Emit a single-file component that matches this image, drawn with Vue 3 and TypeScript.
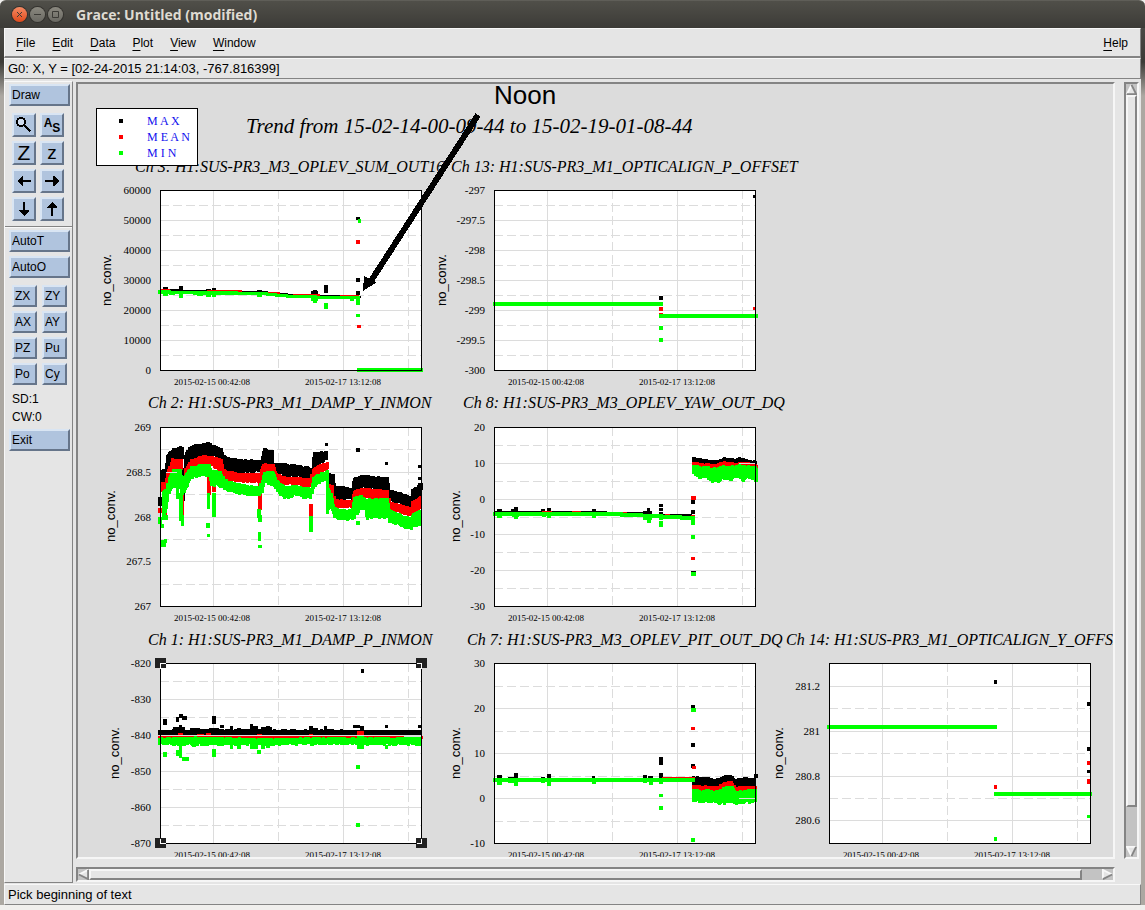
<script setup lang="ts">
type Rect = [x: number, w: number, y: number, h: number]
type Stop = [x: number, top: number, bottom: number]
type Tone = 'max' | 'mean' | 'min' | 'grid'

interface Layer {
  tone: Tone
  bands?: Stop[][]
  rects?: Rect[]
  rough?: number
}

interface Chart {
  title: string
  titleX: number
  titleY: number
  x: number
  y: number
  h: number
  unitX: number
  unitY: number
  ticks: string[]
  first: number
  pitch: number
  originX: number
  originY: number
  selected?: boolean
  layers: Layer[]
}

// Sample coordinates are stored in thirds of a canvas unit from each chart's origin.
const SUB = 3
const PLOT_W = 262

const charts: Chart[] = [
  {
    title: 'Ch 3: H1:SUS-PR3_M3_OPLEV_SUM_OUT16', titleX: 135, titleY: 172,
    x: 160, y: 190, h: 180, unitX: 111, unitY: 280,
    ticks: ['60000', '50000', '40000', '30000', '20000', '10000', '0'], first: 0, pitch: 30,
    originX: 90, originY: 80,
    layers: [
      {
        tone: 'max', bands: [[[210, 626, 634], [290, 630, 638], [370, 630, 638], [520, 634, 640], [600, 642, 648], [808, 647, 653]]],
        rects: [[218, 16, 621, 10], [267, 13, 618, 12], [348, 14, 628, 8], [366, 12, 623, 10], [502, 16, 630, 8], [663, 20, 633, 12], [669, 11, 630, 10], [702, 12, 615, 23], [798, 12, 412, 10], [798, 12, 594, 12], [798, 12, 633, 12]],
      },
      { tone: 'mean', rects: [[212, 28, 626, 6], [350, 105, 630, 6], [535, 35, 636, 6], [610, 80, 641, 6], [750, 58, 645, 6], [798, 12, 480, 12], [802, 11, 735, 9]] },
      {
        tone: 'min', bands: [[[205, 630, 641], [290, 634, 644], [370, 632, 644], [450, 635, 645], [520, 637, 647], [600, 645, 655], [700, 647, 657], [804, 649, 659]]],
        rects: [[218, 14, 636, 12], [267, 13, 640, 14], [320, 18, 638, 10], [348, 16, 640, 11], [366, 12, 638, 11], [502, 14, 640, 11], [663, 22, 650, 12], [669, 12, 655, 14], [702, 12, 669, 18], [780, 12, 650, 13], [798, 12, 648, 14], [798, 12, 663, 12], [798, 12, 702, 9], [803, 10, 417, 12], [801, 198, 864, 11]],
      },
    ],
  },
  {
    title: 'Ch 13: H1:SUS-PR3_M1_OPTICALIGN_P_OFFSET', titleX: 451, titleY: 172,
    x: 494, y: 190, h: 180, unitX: 446, unitY: 280,
    ticks: ['-297', '-297.5', '-298', '-298.5', '-299', '-299.5', '-300'], first: 0, pitch: 30,
    originX: 435, originY: 80,
    layers: [
      { tone: 'max', rects: [[672, 12, 648, 12], [954, 8, 345, 9]] },
      { tone: 'mean', rects: [[672, 12, 681, 12], [672, 12, 699, 9], [954, 8, 681, 9]] },
      { tone: 'min', rects: [[174, 510, 666, 12], [672, 297, 702, 12], [672, 12, 738, 12], [672, 12, 774, 12]] },
    ],
  },
  {
    title: 'Ch 2: H1:SUS-PR3_M1_DAMP_Y_INMON', titleX: 148, titleY: 408,
    x: 160, y: 427, h: 179, unitX: 115, unitY: 516,
    ticks: ['269', '268.5', '268', '267.5', '267'], first: 0, pitch: 44.75,
    originX: 95, originY: 390,
    layers: [
      {
        tone: 'max', rough: 6,
        bands: [
          [[198, 240, 290], [206, 240, 280], [215, 192, 250], [230, 178, 208], [260, 172, 208]],
          [[266, 195, 230], [280, 172, 210], [300, 165, 198], [335, 160, 192], [375, 176, 208], [384, 200, 238], [430, 211, 248], [494, 212, 240], [503, 180, 218], [529, 182, 222]],
          [[534, 220, 248], [600, 227, 258], [648, 235, 262], [654, 190, 232], [694, 184, 204]],
          [[700, 252, 282], [710, 255, 300], [716, 290, 328], [768, 295, 325], [774, 265, 300], [795, 257, 288], [872, 264, 300], [880, 300, 330], [943, 320, 348], [949, 298, 335], [976, 282, 320]],
        ],
        rects: [[190, 12, 320, 28], [505, 11, 174, 12], [332, 10, 155, 12], [252, 10, 168, 12], [690, 9, 159, 9], [783, 12, 174, 12], [870, 9, 216, 9], [970, 9, 226, 10], [970, 9, 262, 8], [970, 14, 278, 20], [262, 8, 235, 100]],
      },
      {
        tone: 'mean', rough: 3,
        bands: [
          [[198, 275, 305], [206, 280, 310], [216, 238, 270], [228, 207, 240], [260, 210, 238]],
          [[268, 235, 268], [285, 210, 235], [320, 197, 225], [345, 199, 225], [375, 208, 250], [384, 240, 268], [430, 251, 275], [490, 249, 275], [500, 222, 255], [530, 222, 250], [540, 250, 275], [560, 260, 280], [642, 265, 289], [650, 238, 270], [665, 225, 250], [695, 217, 236]],
          [[692, 282, 310], [709, 288, 320], [714, 328, 352], [768, 333, 352], [774, 302, 330], [795, 294, 320], [874, 302, 330], [880, 335, 358], [943, 353, 377], [949, 335, 375], [974, 318, 348]],
        ],
        rects: [[190, 12, 354, 16], [206, 10, 345, 30], [257, 10, 275, 100], [336, 12, 250, 65], [352, 12, 280, 28], [488, 11, 250, 110], [642, 12, 342, 36]],
      },
      {
        tone: 'min', rough: 7,
        bands: [
          [[200, 305, 390], [210, 300, 355], [218, 265, 310], [230, 240, 285], [252, 240, 292], [259, 270, 310], [272, 248, 290], [285, 232, 262], [310, 227, 255], [338, 225, 255], [345, 242, 280], [372, 247, 288], [385, 270, 295], [420, 282, 308], [489, 293, 315], [498, 270, 305], [505, 248, 280], [530, 248, 282], [545, 276, 305], [565, 290, 322], [600, 289, 313], [643, 297, 325], [652, 264, 290], [670, 252, 272], [695, 244, 270]],
          [[692, 290, 365], [704, 312, 345], [714, 352, 380], [740, 362, 388], [768, 358, 385], [775, 322, 380], [796, 318, 355], [807, 330, 352], [812, 330, 382], [872, 326, 380], [880, 358, 392], [900, 370, 400], [920, 380, 410], [945, 384, 415], [952, 372, 405], [974, 360, 402]],
        ],
        rects: [[190, 12, 381, 22], [198, 10, 402, 12], [197, 14, 450, 20], [208, 10, 447, 12], [206, 12, 375, 15], [244, 8, 290, 35], [253, 12, 308, 84], [259, 10, 375, 32], [337, 10, 310, 48], [333, 12, 400, 16], [337, 10, 433, 9], [352, 12, 308, 72], [486, 12, 357, 26], [490, 11, 375, 20], [488, 10, 427, 28], [490, 11, 466, 10], [642, 12, 378, 48], [692, 9, 250, 124], [783, 12, 393, 12]],
      },
      { tone: 'grid', rects: [[213, 34, 246, 3]] },
    ],
  },
  {
    title: 'Ch 8: H1:SUS-PR3_M3_OPLEV_YAW_OUT_DQ', titleX: 463, titleY: 408,
    x: 494, y: 427, h: 179, unitX: 460, unitY: 516,
    ticks: ['20', '10', '0', '-10', '-20', '-30'], first: 0, pitch: 35.8,
    originX: 440, originY: 390,
    layers: [
      {
        tone: 'max', rough: 4,
        bands: [[[756, 202, 222], [800, 210, 225], [830, 212, 225], [850, 203, 222], [880, 207, 222], [895, 203, 222], [930, 213, 220], [945, 213, 226]]],
        rects: [[162, 340, 362, 6], [555, 55, 366, 5], [660, 96, 372, 5], [170, 14, 357, 8], [213, 20, 358, 8], [222, 12, 351, 10], [303, 12, 357, 8], [321, 12, 354, 10], [457, 11, 357, 8], [610, 26, 362, 10], [622, 10, 354, 12], [657, 12, 342, 9], [657, 12, 354, 9], [657, 12, 366, 9], [753, 12, 330, 12], [753, 12, 361, 12], [753, 14, 543, 9]],
      },
      {
        tone: 'mean', rough: 4,
        bands: [[[756, 216, 235], [790, 222, 238], [820, 224, 240], [850, 215, 235], [885, 220, 235], [905, 216, 233], [947, 225, 238]]],
        rects: [[305, 30, 363, 6], [397, 26, 363, 6], [530, 30, 366, 5], [675, 14, 372, 5], [753, 14, 318, 12], [753, 12, 501, 9], [753, 12, 374, 6]],
      },
      {
        tone: 'min', rough: 10,
        bands: [[[757, 228, 250], [765, 231, 260], [790, 232, 256], [812, 238, 270], [830, 236, 270], [850, 229, 260], [870, 232, 265], [890, 228, 256], [905, 230, 268], [925, 232, 258], [947, 236, 265]]],
        rects: [[160, 390, 366, 12], [540, 70, 369, 12], [608, 60, 371, 12], [665, 60, 375, 12], [720, 45, 377, 12], [172, 14, 375, 8], [215, 22, 376, 6], [222, 12, 378, 9], [305, 12, 375, 7], [321, 12, 376, 10], [457, 12, 376, 8], [610, 28, 380, 10], [621, 12, 386, 12], [657, 12, 381, 10], [657, 12, 393, 18], [753, 12, 380, 14], [753, 12, 396, 9], [753, 12, 435, 12], [753, 14, 547, 12], [943, 11, 262, 14]],
      },
      { tone: 'grid', rects: [[897, 50, 219, 3]] },
    ],
  },
  {
    title: 'Ch 1: H1:SUS-PR3_M1_DAMP_P_INMON', titleX: 148, titleY: 645,
    x: 160, y: 663, h: 180, unitX: 119, unitY: 753,
    ticks: ['-820', '-830', '-840', '-850', '-860', '-870'], first: 0, pitch: 36,
    originX: 95, originY: 625,
    selected: true,
    layers: [
      {
        tone: 'max', rough: 3,
        bands: [[[190, 316, 330], [230, 315, 330], [350, 314, 330], [700, 315, 330], [976, 316, 330]]],
        rects: [[204, 12, 282, 17], [243, 10, 277, 16], [252, 12, 267, 12], [262, 16, 273, 12], [352, 11, 273, 24], [375, 12, 300, 9], [405, 9, 303, 14], [233, 35, 307, 12], [253, 10, 300, 10], [285, 30, 309, 8], [343, 30, 309, 8], [427, 12, 309, 8], [465, 10, 297, 14], [465, 24, 303, 16], [497, 32, 306, 12], [512, 12, 302, 10], [642, 12, 303, 14], [655, 14, 310, 8], [688, 10, 303, 14], [705, 12, 311, 8], [775, 20, 299, 9], [795, 12, 304, 16], [797, 10, 132, 12], [870, 9, 300, 9], [970, 12, 300, 9]],
      },
      {
        tone: 'mean', rects: [[190, 794, 333, 10], [250, 14, 324, 12], [305, 20, 327, 9], [333, 14, 324, 12], [487, 14, 326, 10], [498, 20, 330, 16], [642, 12, 327, 9], [785, 22, 318, 20]],
      },
      {
        tone: 'min', rough: 6,
        bands: [[[190, 340, 357], [260, 338, 357], [350, 338, 357], [500, 342, 357], [700, 339, 355], [976, 339, 358]]],
        rects: [[204, 11, 381, 14], [243, 10, 375, 18], [252, 10, 362, 36], [262, 20, 397, 11], [290, 12, 350, 15], [352, 11, 372, 24], [375, 12, 352, 12], [405, 9, 360, 12], [427, 11, 360, 12], [465, 10, 358, 14], [475, 14, 360, 12], [486, 12, 375, 12], [498, 12, 358, 16], [512, 12, 356, 12], [785, 22, 330, 42], [783, 12, 420, 12], [783, 12, 594, 12], [870, 9, 360, 12]],
      },
      { tone: 'grid', rects: [[198, 782, 330, 3], [927, 52, 333, 3]] },
    ],
  },
  {
    title: 'Ch 7: H1:SUS-PR3_M3_OPLEV_PIT_OUT_DQ', titleX: 467, titleY: 645,
    x: 494, y: 663, h: 180, unitX: 460, unitY: 753,
    ticks: ['30', '20', '10', '0', '-10'], first: 0, pitch: 45,
    originX: 440, originY: 625,
    layers: [
      {
        tone: 'max', rough: 5,
        bands: [[[756, 455, 490], [790, 457, 490], [825, 464, 495], [852, 452, 490], [868, 452, 490], [882, 464, 495], [900, 459, 490], [943, 460, 492]]],
        rects: [[170, 14, 451, 10], [205, 30, 455, 6], [222, 12, 444, 14], [322, 11, 447, 12], [303, 12, 456, 6], [457, 10, 453, 8], [609, 12, 450, 10], [625, 14, 454, 6], [657, 12, 396, 24], [657, 12, 444, 14], [753, 12, 240, 12], [753, 12, 354, 12], [753, 12, 417, 12], [943, 12, 447, 12]],
      },
      {
        tone: 'mean', rough: 4,
        bands: [[[757, 482, 505], [830, 485, 510], [852, 472, 500], [870, 468, 495], [882, 488, 505], [905, 484, 505], [945, 485, 505]]],
        rects: [[665, 100, 456, 4], [753, 12, 305, 10], [756, 12, 422, 10]],
      },
      {
        tone: 'min', rough: 9,
        bands: [[[757, 496, 530], [790, 498, 525], [830, 500, 532], [855, 485, 530], [872, 488, 525], [885, 500, 532], [945, 497, 527]]],
        rects: [[160, 605, 459, 12], [170, 14, 468, 12], [205, 20, 466, 8], [222, 12, 468, 15], [303, 12, 466, 8], [322, 11, 468, 15], [371, 14, 466, 7], [390, 18, 466, 7], [457, 11, 468, 8], [609, 12, 468, 7], [627, 12, 468, 12], [657, 12, 468, 8], [657, 12, 507, 9], [657, 12, 543, 12], [754, 14, 248, 13], [753, 12, 639, 12]],
      },
      { tone: 'grid', rects: [[897, 50, 519, 3]] },
    ],
  },
  {
    title: 'Ch 14: H1:SUS-PR3_M1_OPTICALIGN_Y_OFFSET', titleX: 786, titleY: 645,
    x: 829, y: 663, h: 180, unitX: 783, unitY: 753,
    ticks: ['281.2', '281', '280.8', '280.6'], first: 23, pitch: 44.8,
    originX: 770, originY: 620,
    layers: [
      { tone: 'max', rects: [[672, 9, 180, 12], [951, 10, 246, 12], [951, 10, 381, 12], [951, 10, 450, 9]] },
      { tone: 'mean', rects: [[672, 9, 495, 12], [951, 10, 423, 12], [951, 10, 477, 15]] },
      { tone: 'min', rects: [[171, 510, 315, 12], [672, 294, 516, 12], [672, 9, 651, 12], [951, 10, 585, 9]] },
    ],
  },
]

function noise(n: number): number {
  const v = Math.sin(n * 12.9898) * 43758.5453
  return v - Math.floor(v)
}

function layerPath(chart: Chart, layer: Layer): string {
  const parts: string[] = []
  const box = (x: number, w: number, y: number, h: number) => {
    const left = Math.round(x / SUB) + chart.originX
    const top = Math.round(y / SUB) + chart.originY
    const wide = Math.max(1, Math.round(w / SUB))
    const high = Math.max(1, Math.round(h / SUB))
    parts.push(`M${left} ${top}h${wide}v${high}h${-wide}z`)
  }
  for (const band of layer.bands ?? []) {
    const rough = layer.rough ?? 0
    for (let i = 0; i < band.length - 1; i++) {
      const [x0, t0, b0] = band[i]
      const [x1, t1, b1] = band[i + 1]
      for (let x = x0; x < x1; x += 4) {
        const k = (x - x0) / (x1 - x0)
        const top = t0 + (t1 - t0) * k - noise(x) * rough * 0.6
        const bottom = b0 + (b1 - b0) * k + noise(x + 0.5) * rough
        box(x, 9, top, bottom - top)
      }
    }
  }
  for (const [x, w, y, h] of layer.rects ?? []) box(x, w, y, h)
  return parts.join('')
}

const majorX = [53, 183]
const minorX = [118, 248]

function majorY(c: Chart): number[] {
  return c.ticks.map((_, i) => c.y + c.first + i * c.pitch)
}
function minorY(c: Chart): number[] {
  const last = c.ticks.length - 1
  return c.ticks.slice(0, last).map((_, i) => c.y + c.first + (i + 0.5) * c.pitch)
}
function gridPath(c: Chart): string {
  const v = majorX.map((x) => `M${c.x + x + 0.5} ${c.y}v${c.h}`)
  const h = majorY(c).map((y) => `M${c.x} ${Math.round(y) + 0.5}h${PLOT_W}`)
  return [...v, ...h].join('')
}
function dashPath(c: Chart): string {
  const v = minorX.map((x) => `M${c.x + x + 0.5} ${c.y}v${c.h}`)
  const h = minorY(c).map((y) => `M${c.x} ${Math.round(y) + 0.5}h${PLOT_W}`)
  return [...v, ...h].join('')
}
function corners(c: Chart) {
  return [
    { x: c.x, y: c.y, sx: 1, sy: 1 },
    { x: c.x + PLOT_W - 1, y: c.y, sx: -1, sy: 1 },
    { x: c.x, y: c.y + c.h, sx: 1, sy: -1 },
    { x: c.x + PLOT_W - 1, y: c.y + c.h, sx: -1, sy: -1 },
  ]
}

const legend = [
  { label: 'M A X', tone: 'max' },
  { label: 'M E A N', tone: 'mean' },
  { label: 'M I N', tone: 'min' },
]
const menus = ['File', 'Edit', 'Data', 'Plot', 'View', 'Window']
const pairs = ['ZX', 'ZY', 'AX', 'AY', 'PZ', 'Pu', 'Po', 'Cy']
const arrows = [
  { name: 'Scroll left', turn: 180 },
  { name: 'Scroll right', turn: 0 },
  { name: 'Scroll down', turn: 90 },
  { name: 'Scroll up', turn: 270 },
]
</script>

<template>
  <div class="window">
    <header class="titlebar">
      <button class="wm close" aria-label="Close">
        <svg viewBox="0 0 15 15"><path d="M5 5l5 5M10 5l-5 5" /></svg>
      </button>
      <button class="wm" aria-label="Minimize">
        <svg viewBox="0 0 15 15"><path d="M4 7.500h7" /></svg>
      </button>
      <button class="wm" aria-label="Maximize">
        <svg viewBox="0 0 15 15"><path d="M4.500 4.500h6v6h-6z" /></svg>
      </button>
      <h1>Grace: Untitled (modified)</h1>
    </header>

    <div class="body">
      <nav class="menubar">
        <button v-for="m in menus" :key="m"><u>{{ m[0] }}</u>{{ m.slice(1) }}</button>
        <button class="help"><u>H</u>elp</button>
      </nav>
      <div class="strip locator">G0: X, Y = [02-24-2015 21:14:03, -767.816399]</div>

      <div class="main">
        <aside class="tools">
          <button class="key wide">Draw</button>
          <div class="icons">
            <button class="key icon" aria-label="Zoom">
              <svg viewBox="0 0 20 20"><circle cx="7" cy="7" r="4" class="lens" /><path d="M9.500 9.500l7 7" class="handle" /></svg>
            </button>
            <button class="key icon auto"><span>A</span><span class="low">S</span></button>
            <button class="key icon big">Z</button>
            <button class="key icon small">z</button>
            <button v-for="a in arrows" :key="a.name" class="key icon" :aria-label="a.name">
              <svg viewBox="0 0 20 20">
                <path :transform="`rotate(${a.turn} 10 10)`" d="M3 9h8V5h1l5 5l-5 5h-1v-4H3z" />
              </svg>
            </button>
          </div>
          <hr />
          <div class="stack">
            <button class="key wide">AutoT</button>
            <button class="key wide">AutoO</button>
          </div>
          <div class="pairs">
            <button v-for="p in pairs" :key="p" class="key pair">{{ p }}</button>
          </div>
          <p>SD:1</p>
          <p>CW:0</p>
          <button class="key wide exit">Exit</button>
        </aside>

        <section class="view">
          <div class="canvas">
            <svg class="drawing" viewBox="78 84 1036 773" width="1036" height="773">
              <g v-for="c in charts" :key="c.title">
                <rect class="paper" :x="c.x" :y="c.y" :width="PLOT_W" :height="c.h" />
                <path class="grid" :d="gridPath(c)" />
                <path class="grid dashed" :d="dashPath(c)" />
                <path v-for="(l, i) in c.layers" :key="i" :class="['data', l.tone]" :d="layerPath(c, l)" />
                <rect class="frame" :x="c.x + 0.5" :y="c.y + 0.5" :width="PLOT_W - 1" :height="c.h" />
                <text class="title" :x="c.titleX" :y="c.titleY">{{ c.title }}</text>
                <text v-for="(t, i) in c.ticks" :key="t" class="ytick" :x="c.x - 9" :y="Math.round(majorY(c)[i]) + 4">{{ t }}</text>
                <text class="xtick" :x="c.x + 52" :y="c.y + c.h + 15">2015-02-15 00:42:08</text>
                <text class="xtick" :x="c.x + 183" :y="c.y + c.h + 15">2015-02-17 13:12:08</text>
                <text class="unit" :transform="`translate(${c.unitX} ${c.unitY}) rotate(-90)`">no_conv.</text>
                <template v-if="c.selected">
                  <g v-for="(k, i) in corners(c)" :key="i">
                    <rect class="mark" :x="k.x - 5" :y="k.y - 5" width="11" height="10" />
                    <path class="notch" :d="`M${k.x + 0.5 + 5 * k.sx} ${k.y + 0.5}h${-5 * k.sx}v${5 * k.sy}`" />
                  </g>
                </template>
              </g>

              <rect class="key-box" x="96.500" y="108.500" width="101" height="57" />
              <g v-for="(k, i) in legend" :key="k.label">
                <rect :class="['data', k.tone]" x="119" :y="119 + i * 16" width="4" height="4" />
                <text class="legend" x="147" :y="125 + i * 16">{{ k.label }}</text>
              </g>

              <text class="headline" x="246" y="133">Trend from 15-02-14-00-09-44 to 15-02-19-01-08-44</text>
              <text class="note" x="494" y="104">Noon</text>
              <path class="shaft" d="M478 115L369 284" />
              <path class="head" d="M363 291L364 276L376 282L374 284Z" />
            </svg>
          </div>
          <div class="bar vertical">
            <svg class="tip" viewBox="0 0 12 12"><path class="face" d="M6 1L11 11H1z" /><path class="lit" d="M1 11L6 1" /><path class="shade" d="M6 1L11 11H1" /></svg>
            <div class="thumb"></div>
            <div class="rest"></div>
            <svg class="tip" viewBox="0 0 12 12"><path class="face" d="M1 1H11L6 11z" /><path class="lit" d="M11 1H1L6 11" /><path class="shade" d="M11 1L6 11" /></svg>
          </div>
          <div class="bar horizontal">
            <svg class="tip" viewBox="0 0 12 12"><path class="face" d="M11 1V11L1 6z" /><path class="lit" d="M11 1L1 6" /><path class="shade" d="M11 1V11L1 6" /></svg>
            <div class="thumb"></div>
            <div class="rest"></div>
            <svg class="tip" viewBox="0 0 12 12"><path class="face" d="M1 1L11 6L1 11z" /><path class="lit" d="M1 11V1L11 6" /><path class="shade" d="M11 6L1 11" /></svg>
          </div>
        </section>
      </div>

      <footer class="strip status">Pick beginning of text</footer>
    </div>
  </div>
</template>

<style>
body {
  background: #f0efed;
}
</style>

<style scoped>
* {
  box-sizing: border-box;
}
.window {
  display: flex;
  flex-direction: column;
  height: 100vh;
  color: #000;
  font: 12px/16px "Liberation Sans", Arial, sans-serif;
}
button {
  border: 0;
  padding: 0;
  background: none;
  color: inherit;
  font: inherit;
}
.titlebar {
  display: flex;
  align-items: center;
  gap: 3px;
  height: 28px;
  padding-left: 12px;
  flex: none;
  border-radius: 6px 6px 0 0;
  border-top: 1px solid #5f5e58;
  background: linear-gradient(#504f49, #3c3b37);
}
.titlebar h1 {
  margin: 0 0 0 10px;
  color: #dfdbd2;
  font: bold 14px/20px "Open Sans", "Noto Sans", sans-serif;
}
.wm {
  width: 15px;
  height: 15px;
  border-radius: 50%;
  background: linear-gradient(#8a887f, #6a6963);
  box-shadow: 0 0 0 1px #33322e;
}
.wm svg {
  display: block;
  fill: none;
  stroke: #3c3b37;
  stroke-width: 1;
}
.wm.close {
  background: linear-gradient(#f58a63, #df4a1c);
}
.body {
  display: flex;
  flex: 1;
  flex-direction: column;
  min-height: 0;
  border: solid transparent;
  border-width: 0 4px;
  background:
    linear-gradient(#e5e5e5, #e5e5e5) padding-box,
    linear-gradient(#4a4945, #3c3b37 34px, #aca8a2 68px) border-box;
  margin-bottom: 5px;
}
.menubar {
  display: flex;
  align-items: center;
  gap: 17px;
  height: 30px;
  flex: none;
  padding: 0 12px 0 11px;
  border: solid;
  border-width: 1px 1px 2px;
  border-color: #f8f8f8 #848484 #848484 #f8f8f8;
}
.menubar u {
  text-underline-offset: 3px;
}
.menubar .help {
  margin-left: auto;
}
.strip {
  flex: none;
  height: 21px;
  padding-left: 3px;
  border: solid;
  border-width: 1px;
  border-color: #f8f8f8 #848484 #848484 #f8f8f8;
  font-size: 13px;
  line-height: 19px;
}
.locator {
  margin-bottom: 2px;
}
.status {
  margin-top: 1px;
}
.main {
  display: flex;
  flex: 1;
  gap: 3px;
  min-height: 0;
}
.tools {
  width: 69px;
  flex: none;
  padding: 2px 0 0 4px;
  border: solid;
  border-width: 1px;
  border-color: #f8f8f8 #848484 #848484 #f8f8f8;
}
.key {
  display: block;
  height: 22px;
  border: solid;
  border-width: 2px;
  border-color: #d9e5f3 #66758a #66758a #d9e5f3;
  background: #b0c4de;
  text-align: left;
  line-height: 16px;
}
.wide {
  width: 61px;
  padding-left: 1px;
}
.icons {
  display: grid;
  grid-template-columns: 24px 24px;
  gap: 4px;
  padding: 7px 0 5px 3px;
}
.icon {
  width: 24px;
  height: 24px;
}
.icon svg {
  display: block;
  width: 20px;
  height: 20px;
  shape-rendering: crispEdges;
}
.lens {
  fill: #cfdcee;
  stroke: #000;
  stroke-width: 2;
}
.handle {
  stroke: #000;
  stroke-width: 2;
}
.auto {
  display: flex;
  align-items: center;
  justify-content: center;
  font-size: 12px;
  font-weight: bold;
  line-height: 12px;
}
.auto span {
  padding-bottom: 5px;
}
.auto .low {
  padding: 5px 0 0;
}
.big,
.small {
  text-align: center;
  font-size: 21px;
  line-height: 20px;
}
.small {
  font-size: 19px;
  line-height: 16px;
}
hr {
  height: 2px;
  margin: 0 0 2px -4px;
  border: solid;
  border-width: 1px 0;
  border-color: #848484 #f8f8f8 #f8f8f8;
}
.stack {
  display: grid;
  gap: 4px;
}
.pairs {
  display: grid;
  grid-template-columns: 25px 25px;
  gap: 4px 5px;
  padding: 7px 0 5px 3px;
}
.pair {
  padding-left: 1px;
}
.tools p {
  margin: 0 0 0 3px;
  line-height: 18px;
}
.exit {
  margin-top: 3px;
}
.view {
  display: grid;
  flex: 1;
  grid-template-columns: minmax(0, 1fr) 15px;
  grid-template-rows: minmax(0, 1fr) 15px;
  gap: 8px 9px;
  min-width: 0;
  padding: 1px 2px 1px 0;
}
.canvas {
  overflow: hidden;
  border: solid;
  border-width: 2px;
  border-color: #848484 #f6f6f6 #f6f6f6 #848484;
  background: #dcdcdc;
}
.drawing {
  display: block;
}
.bar {
  display: flex;
  border: solid;
  border-width: 2px;
  border-color: #848484 #f6f6f6 #f6f6f6 #848484;
  background: #c3c3c3;
}
.vertical {
  flex-direction: column;
}
.thumb {
  flex: 708;
  border: solid;
  border-width: 2px;
  border-color: #f6f6f6 #848484 #848484 #f6f6f6;
  background: #e5e5e5;
}
.rest {
  flex: 39;
}
.horizontal .thumb {
  flex: 991;
}
.horizontal .rest {
  flex: 20;
}
.tip {
  display: block;
  width: 11px;
  height: 11px;
  flex: none;
}
.vertical .tip,
.horizontal .tip {
  fill: none;
  stroke-width: 2;
}
.tip .face {
  fill: #e5e5e5;
}
.tip .lit {
  stroke: #f8f8f8;
}
.tip .shade {
  stroke: #848484;
}
.paper,
.key-box {
  fill: #fff;
}
.paper,
.grid,
.data,
.frame,
.key-box,
.mark,
.notch,
.shaft,
.head {
  shape-rendering: crispEdges;
}
.grid {
  fill: none;
  stroke: #dcdcdc;
}
path.data.grid {
  fill: #dcdcdc;
  stroke: none;
}
.dashed {
  stroke-dasharray: 9 4;
}
.max {
  fill: #000;
}
.mean {
  fill: #f00;
}
.min {
  fill: #0f0;
}
.frame {
  fill: none;
  stroke: #000;
}
.key-box {
  stroke: #000;
}
.mark {
  fill: #222;
}
.notch {
  fill: none;
  stroke: #fff;
}
.shaft {
  fill: none;
  stroke: #000;
  stroke-width: 6;
}
.title,
.headline,
.legend,
.ytick,
.xtick {
  font-family: "Liberation Serif", "Times New Roman", serif;
}
.title {
  font-size: 16px;
  font-style: italic;
}
.headline {
  font-size: 21px;
  font-style: italic;
}
.ytick {
  font-size: 11px;
  text-anchor: end;
}
.xtick {
  font-size: 9px;
  text-anchor: middle;
}
.legend {
  fill: #11e;
  font-size: 12px;
}
.unit {
  font-size: 13px;
  text-anchor: middle;
}
.note {
  font-size: 26px;
}
</style>
